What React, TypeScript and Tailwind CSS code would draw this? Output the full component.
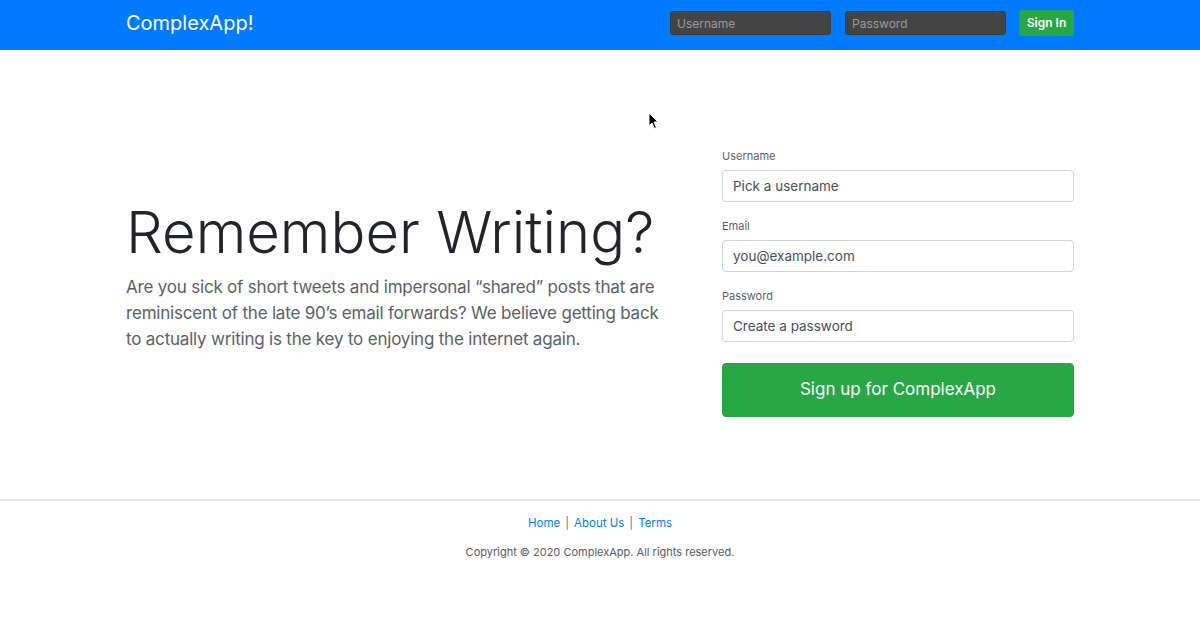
import React from "react";

const font = { fontFamily: "Inter, 'Noto Sans', 'Liberation Sans', sans-serif" };

export default function App() {
  return (
    <div className="relative w-[1200px] h-[638px] bg-white overflow-hidden" style={font}>
      <header className="h-[50px] bg-[#007bff] flex items-center pb-[4px]">
        <div className="w-[948px] mx-auto flex items-center">
          <div className="text-white text-[20px] leading-none">ComplexApp!</div>
          <div className="ml-auto flex items-center">
            <input
              className="w-[161px] h-[24px] rounded-[3px] bg-[#444444] border border-[#3a3a3a] px-[6px] text-[12px] text-white placeholder:text-[#9a9a9a] outline-none"
              placeholder="Username"
            />
            <input
              className="ml-[14px] w-[161px] h-[24px] rounded-[3px] bg-[#444444] border border-[#3a3a3a] px-[6px] text-[12px] text-white placeholder:text-[#9a9a9a] outline-none"
              placeholder="Password"
            />
            <button className="ml-[13px] w-[55px] h-[26px] rounded-[3px] bg-[#28a745] text-white text-[12px] font-semibold">
              Sign In
            </button>
          </div>
        </div>
      </header>

      <main className="w-[948px] mx-auto pt-[97px] pb-[82px] flex items-center">
        <div className="w-[540px] -mt-[16px]">
          <h1 className="text-[#212529] text-[58px] font-light leading-[72px] mb-[6px] whitespace-nowrap">Remember Writing?</h1>
          <p className="text-[#5a6169] text-[17px] leading-[26px] tracking-[-0.2px]">
            Are you sick of short tweets and impersonal “shared” posts that are reminiscent of the late 90’s email
            forwards? We believe getting back to actually writing is the key to enjoying the internet again.
          </p>
        </div>
        <form className="ml-auto w-[352px]">
          {[
            ["Username", "Pick a username"],
            ["Email", "you@example.com"],
            ["Password", "Create a password"],
          ].map(([l, p]) => (
            <div key={l} className="mb-[15px]">
              <label className="block text-[11px] leading-[18px] text-[#5a6169] mb-[5px]">{l}</label>
              <input
                className="w-full h-[32px] rounded-[4px] border border-[#ced4da] px-[10px] text-[13.5px] text-[#495057] placeholder:text-[#495057] outline-none"
                placeholder={p}
              />
            </div>
          ))}
          <button
            type="button"
            className="mt-[6px] w-full h-[54px] rounded-[4px] bg-[#28a745] border border-[#28a745] text-white text-[17px]"
          >
            Sign up for ComplexApp
          </button>
        </form>
      </main>

      <footer className="border-t-2 border-[#e9ecef] pt-[13px] text-center">
        <div className="text-[11.5px] leading-[18px] text-[#6c757d]">
          <a className="text-[#007bff]">Home</a>
          <span className="mx-[5px]">|</span>
          <a className="text-[#007bff]">About Us</a>
          <span className="mx-[5px]">|</span>
          <a className="text-[#007bff]">Terms</a>
        </div>
        <div className="mt-[11px] text-[11px] leading-[18px] text-[#555b62]">
          Copyright © 2020 ComplexApp. All rights reserved.
        </div>
      </footer>

      <svg className="absolute left-[648px] top-[112px]" width="12" height="18" viewBox="0 0 12 18">
        <path d="M1 1 L1 14 L4 11 L6.5 16.5 L8.5 15.5 L6 10 L10 10 Z" fill="#000" stroke="#fff" strokeWidth="1" />
      </svg>
    </div>
  );
}
